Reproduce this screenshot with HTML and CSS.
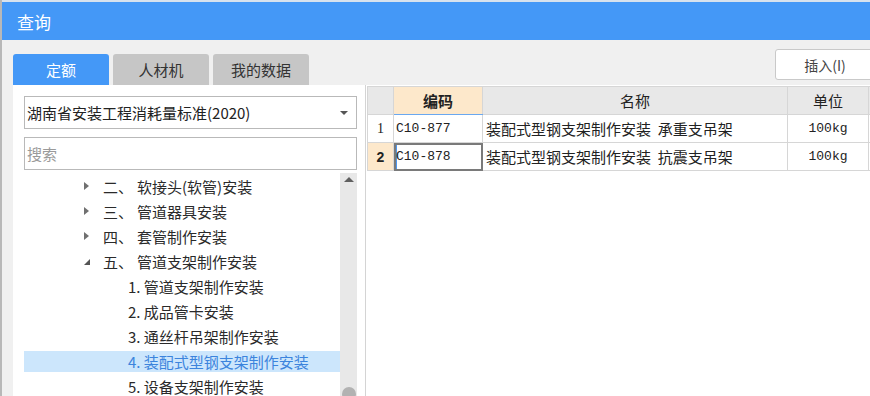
FILE: index.html
```html
<!DOCTYPE html>
<html lang="zh-CN">
<head>
    <meta charset="UTF-8">
    <meta name="viewport" content="width=device-width, initial-scale=1.0">
    <title>查询</title>
    <link rel="stylesheet" href="styles.css">
</head>
<body>
    <div class="dialog">
        <div class="titlebar">查询</div>
        <div class="content">
            <div class="toolbar">
                <div class="tabs">
                    <div class="tab active">定额</div>
                    <div class="tab">人材机</div>
                    <div class="tab">我的数据</div>
                </div>
                <button type="button" class="btn-insert">插入(I)</button>
            </div>

            <div class="main">
                <div class="left-panel">
                    <div class="select">
                        <span>湖南省安装工程消耗量标准(2020)</span>
                        <span class="caret"></span>
                    </div>
                    <input type="text" class="search" placeholder="搜索">

                    <div class="tree-wrap">
                        <ul class="tree">
                            <li class="node"><span class="toggle closed"></span><span class="num">二、</span>软接头(软管)安装</li>
                            <li class="node"><span class="toggle closed"></span><span class="num">三、</span>管道器具安装</li>
                            <li class="node"><span class="toggle closed"></span><span class="num">四、</span>套管制作安装</li>
                            <li class="node"><span class="toggle open"></span><span class="num">五、</span>管道支架制作安装</li>
                            <li class="leaf">1. 管道支架制作安装</li>
                            <li class="leaf">2. 成品管卡安装</li>
                            <li class="leaf">3. 通丝杆吊架制作安装</li>
                            <li class="leaf selected">4. 装配式型钢支架制作安装</li>
                            <li class="leaf">5. 设备支架制作安装</li>
                        </ul>
                        <div class="scrollbar">
                            <span class="arrow-up"></span>
                            <span class="thumb"></span>
                        </div>
                    </div>
                </div>

                <div class="grid">
                    <table>
                        <colgroup>
                            <col class="c-num">
                            <col class="c-code">
                            <col class="c-name">
                            <col class="c-unit">
                            <col>
                        </colgroup>
                        <thead>
                            <tr>
                                <th></th>
                                <th class="sorted">编码</th>
                                <th>名称</th>
                                <th>单位</th>
                                <th></th>
                            </tr>
                        </thead>
                        <tbody>
                            <tr>
                                <td class="rn">1</td>
                                <td class="code">C10-877</td>
                                <td class="name">装配式型钢支架制作安装&nbsp;&nbsp;承重支吊架</td>
                                <td class="unit">100kg</td>
                                <td></td>
                            </tr>
                            <tr class="current">
                                <td class="rn">2</td>
                                <td class="code focus">C10-878</td>
                                <td class="name">装配式型钢支架制作安装&nbsp;&nbsp;抗震支吊架</td>
                                <td class="unit">100kg</td>
                                <td></td>
                            </tr>
                        </tbody>
                    </table>
                </div>
            </div>
        </div>
    </div>
</body>
</html>
```

FILE: styles.css
```css
body {
    margin: 0;
    overflow: hidden;
    background: #f0f0f0;
    font-family: "Noto Sans CJK SC", "Microsoft YaHei", sans-serif;
    color: #222;
}
.dialog {
    width: 878px;
    height: 396px;
    overflow: hidden;
    border-left: 2px solid #b8b8b8;
    background: #f0f0f0;
}
.titlebar {
    height: 38px;
    border-top: 2px solid #d7e2ee;
    background: #4498f7;
    color: #fff;
    font-size: 17px;
    line-height: 40px;
    padding-left: 15px;
}
.content {
    padding-left: 11px;
}
.toolbar {
    height: 45px;
    display: flex;
    justify-content: space-between;
    padding-right: 5px;
}
.tabs {
    display: flex;
    gap: 4px;
    margin-top: 14px;
}
.tab {
    width: 96px;
    height: 31px;
    line-height: 31px;
    text-align: center;
    font-size: 15px;
    background: #c6c6c6;
    color: #333;
    border-radius: 3px 3px 0 0;
}
.tab.active {
    background: #4498f7;
    color: #fff;
}
.btn-insert {
    margin-top: 9px;
    width: 100px;
    height: 31px;
    background: #fff;
    border: 1px solid #c9c9c9;
    border-radius: 3px;
    font-family: inherit;
    font-size: 14px;
    color: #444;
    padding: 0;
}
.main {
    display: flex;
    height: 320px;
}
.left-panel {
    flex-shrink: 0;
    width: 333px;
    padding: 11px 8px 0 11px;
    background: #fff;
    border-right: 1px solid #d4d4d4;
}
.select {
    height: 31px;
    border: 1px solid #b9b9b9;
    display: flex;
    align-items: center;
    justify-content: space-between;
    padding: 0 8px 0 2px;
    font-size: 15px;
}
.caret {
    width: 0;
    height: 0;
    border-left: 4px solid transparent;
    border-right: 4px solid transparent;
    border-top: 4px solid #555;
}
.search {
    display: block;
    margin-top: 8px;
    width: 100%;
    height: 33px;
    box-sizing: border-box;
    border: 1px solid #b9b9b9;
    padding: 0 2px;
    font-family: inherit;
    font-size: 15px;
    outline: none;
}
.search::placeholder {
    color: #9a9a9a;
}
.tree-wrap {
    display: flex;
    margin-top: 3px;
    height: 240px;
}
.tree {
    list-style: none;
    margin: 0;
    padding: 3px 0 0 0;
    flex: 1;
    display: flex;
    flex-direction: column;
    gap: 4px;
    font-size: 15px;
    color: #2a2a2a;
}
.tree li {
    height: 21px;
    line-height: 21px;
    display: flex;
    align-items: center;
    white-space: nowrap;
}
.node {
    padding-left: 60px;
}
.leaf {
    padding-left: 104px;
}
.leaf.selected {
    background: #cce6fc;
    color: #3c84dd;
}
.toggle {
    width: 19px;
    height: 21px;
    position: relative;
}
.toggle.closed::before {
    content: "";
    position: absolute;
    left: 0;
    top: 6px;
    border-top: 4px solid transparent;
    border-bottom: 4px solid transparent;
    border-left: 5px solid #707070;
}
.toggle.open::before {
    content: "";
    position: absolute;
    left: 0;
    top: 8px;
    border-left: 6px solid transparent;
    border-bottom: 6px solid #555;
}
.num {
    width: 34px;
}
.scrollbar {
    width: 17px;
    background: #e8e8e8;
    display: flex;
    flex-direction: column;
    align-items: center;
}
.arrow-up {
    margin-top: 4px;
    border-left: 5px solid transparent;
    border-right: 5px solid transparent;
    border-bottom: 5px solid #606060;
}
.thumb {
    margin-top: 205px;
    width: 14px;
    height: 14px;
    border-radius: 7px;
    background: #b2b2b2;
}
.grid {
    flex: 1;
    min-width: 0;
    background: #fff;
    padding: 1px 0 0 1px;
}
.grid table {
    border-collapse: collapse;
    table-layout: fixed;
    width: 520px;
    border-left: 1px solid #d0d0d0;
}
.c-num { width: 26px; }
.c-code { width: 89px; }
.c-name { width: 305px; }
.c-unit { width: 81px; }
th, td {
    border: 1px solid #d6d6d6;
    padding: 0;
    white-space: nowrap;
    overflow: hidden;
}
th {
    height: 27px;
    background: #e8e8e8;
    font-weight: normal;
    font-size: 15px;
    color: #222;
}
th.sorted {
    background: #fde8cb;
    font-weight: bold;
    border-bottom: 1px solid #6aa8f0;
}
td {
    height: 27px;
    font-size: 15px;
}
td.rn {
    text-align: center;
    font-family: "Liberation Serif", serif;
    font-size: 14px;
}
tr.current td.rn {
    background: #fde8cb;
    font-family: "Liberation Sans", sans-serif;
    font-weight: bold;
}
td.code {
    font-family: "Liberation Mono", monospace;
    font-size: 13px;
    padding-left: 2px;
}
td.focus {
    outline: 2px solid #7a7a7a;
    outline-offset: -2px;
    box-shadow: inset 3px 0 0 #4d97f0;
}
td.name {
    padding-left: 3px;
}
td.unit {
    text-align: center;
    font-family: "Liberation Mono", monospace;
    font-size: 13px;
}
```
